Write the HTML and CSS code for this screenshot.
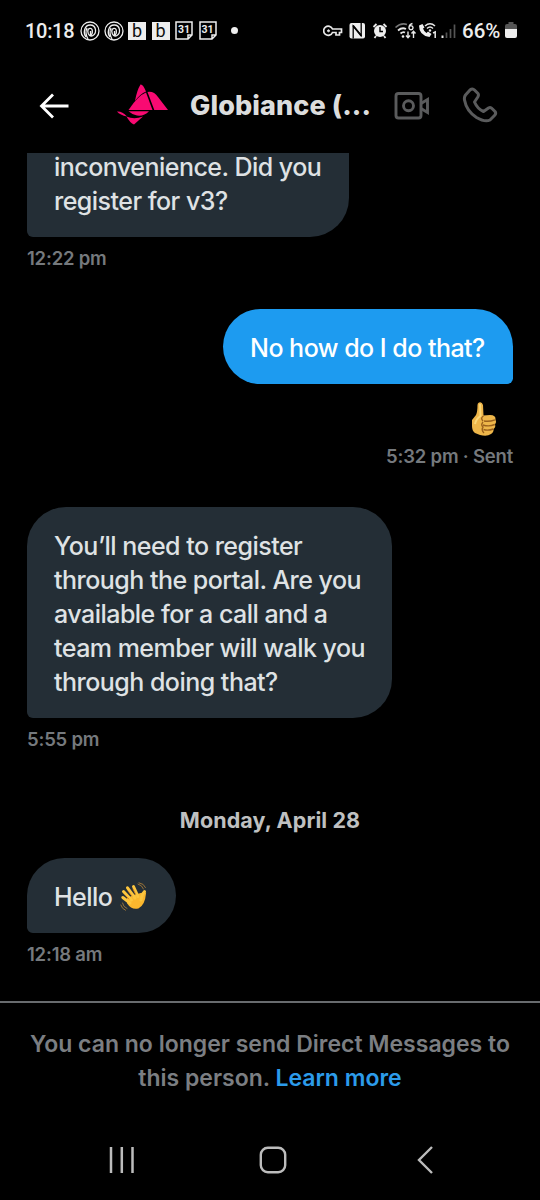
FILE: index.html
```html
<!DOCTYPE html>
<html lang="en">
<head>
<meta charset="utf-8">
<title>Globiance</title>
<link rel="stylesheet" href="styles.css">
</head>
<body>
<div class="phone">
  <div class="status">
    <span class="clock">10:18</span>
    <div class="notifs">
      <svg width="20" height="20" viewBox="0 0 20 20" fill="none" stroke="#eee" stroke-width="1.3"><circle cx="10" cy="10" r="9"/><path d="M6 16C3 12.500 4 4 10.200 4S17 12 13 14.500C10.500 16 8 14 7.800 10.500S12 6 12.300 9.500 11.500 14 10.500 14M10.500 10V15M7 7Q4.500 12 8 18"/></svg>
      <svg width="20" height="20" viewBox="0 0 20 20" fill="none" stroke="#eee" stroke-width="1.3"><circle cx="10" cy="10" r="9"/><path d="M6 16C3 12.500 4 4 10.200 4S17 12 13 14.500C10.500 16 8 14 7.800 10.500S12 6 12.300 9.500 11.500 14 10.500 14M10.500 10V15M7 7Q4.500 12 8 18"/></svg>
      <span class="tile">b</span>
      <span class="tile">b</span>
      <span class="cal"><svg width="18" height="19" viewBox="0 0 18 19" fill="none" stroke="#eee" stroke-width="1.5"><path d="M1 1H17V14L13 18H1ZM13 18V14H17"/></svg><b>31</b></span>
      <span class="cal"><svg width="18" height="19" viewBox="0 0 18 19" fill="none" stroke="#eee" stroke-width="1.5"><path d="M1 1H17V14L13 18H1ZM13 18V14H17"/></svg><b>31</b></span>
      <i class="dot"></i>
    </div>
    <svg class="system" width="136" height="22" viewBox="0 0 136 22" fill="none" stroke="#e8e8e8" stroke-width="2">
      <path d="M9.500 9H18.500V12.500H16.500V15H13V12.500H9.500A4.600 4.600 0 1 1 9.500 9Z" stroke-width="1.700"/><circle cx="5.500" cy="10.800" r="1" fill="#e8e8e8" stroke-width="1"/>
      <rect x="26.500" y="3" width="15.500" height="15.500" rx="2" fill="#eee" stroke="none"/><path d="M30.200 18.500V6L38.200 15.500V3" stroke="#000" stroke-width="1.300"/><path d="M30 5.500L38.400 16" stroke="#000" stroke-width="1.800"/>
      <circle cx="57" cy="11" r="6" fill="#eee" stroke="none"/><path d="M50.500 7L53.500 4M60.500 4L63.500 7M53 16L51.500 18M61 16L62.500 18" stroke-width="1.800"/><path d="M57 7V11.500H60" stroke="#000" stroke-width="1.400"/>
      <path d="M72.500 7.500Q78 2.500 84 4.500" stroke="#777" stroke-width="1.600"/><path d="M75 10.500Q79 7 83 9M77.500 13.500Q80 11.500 82 12.500" stroke-width="1.800"/><circle cx="80" cy="16.500" r="1.300" fill="#eee" stroke="none"/>
      <path d="M89.500 3.500Q86 4.500 86 8A2 2 0 1 0 87 6" stroke-width="1.400"/><path d="M85 11.500V17.500M83 15.500L85 17.800 87 15.500M90.500 18V11.500M88.500 13.500L90.500 11.200 92.500 13.500" stroke-width="1.400"/>
      <path d="M96 5.500Q96 15.500 106.500 17L108.500 14 105 11.500 103.500 13Q101 11.500 100 8.500L101.500 7.500 99.500 4Z" fill="#eee" stroke="none"/>
      <path d="M102 6Q107 1.500 112 6M104 8.500Q107 5.500 110 8.500" stroke-width="1.500"/><circle cx="107" cy="10.500" r="1.200" fill="#eee" stroke="none"/><path d="M110 13L112.200 12V18" stroke-width="1.500"/>
      <path d="M119.500 15.500V18" stroke-width="2"/><path d="M123.500 12.500V18M127.500 9V18M131.500 4.500V18" stroke="#555" stroke-width="1.700"/>
    </svg>
    <span class="percent">66%</span>
    <svg class="battery" width="12" height="17" viewBox="0 0 12 17"><path d="M3.500 0H8.500V2H10Q12 2 12 4V8H0V4Q0 2 2 2H3.500Z" fill="#555"/><path d="M0 7H12V14Q12 16 10 16H2Q0 16 0 14Z" fill="#eee"/></svg>
  </div>

  <header class="topbar">
    <svg class="back" width="30" height="26" viewBox="0 0 30 26" fill="none" stroke="#fff" stroke-width="2.800"><path d="M14 1.500L2.500 13 14 24.500M2.500 13H29.500"/></svg>
    <svg class="logo" width="52" height="44" viewBox="0 0 52 44" fill="#f90a72"><path d="M18 18Q20 7 23.500 1.500Q26 1 29 8.500Q23 11 18 18Z"/><path d="M11.500 27Q21 12.500 29 9.500L35.500 27Z"/><path d="M30.500 9Q37 8 41 14L51 27H37.300Z"/><path d="M11.500 28.200H32Q27 33.500 20 32.500Q15 31.500 11.500 28.200Z"/><path d="M0 28.500Q5 28 10 33.500Q3 32 0 28.500Z"/><path d="M9.500 33.500Q17 37 26 33.500L17 41.500Q13 40 9.500 33.500Z"/></svg>
    <h1 class="title">Globiance (...</h1>
    <svg class="video" width="36" height="30" viewBox="0 0 36 30" fill="none" stroke="#5a5b5c" stroke-width="2.900" stroke-linejoin="round"><rect x="2" y="2.500" width="25" height="24.500" rx="2.500"/><circle cx="14.500" cy="14.800" r="5"/><path d="M27 12.500L33.500 8.500V21.500L27 17.500" stroke-linejoin="miter"/></svg>
    <svg class="call" width="36" height="37" viewBox="0 0 36 37" fill="none" stroke="#5a5b5c" stroke-width="3" stroke-linejoin="round"><path d="M8 3Q10.500 1 12.500 3L16 6.500Q17 8 15.800 10L12.500 15Q15.500 22 21.500 24.500L26.500 21Q28.500 19.800 30 21.500L33 24.500Q34.500 26.500 32.500 28.500L28 33Q23 35.500 14.500 30.500Q4.500 24 2.500 13Q2 10 3.500 8Z"/></svg>
  </header>

  <main class="thread">
    <div class="bubble them cut">inconvenience. Did you<br>register for v3?</div>
    <div class="time t1">12:22 pm</div>
    <div class="bubble me">No how do I do that?</div>
    <svg class="thumb" width="26" height="36" viewBox="0 0 26 36"><path d="M8 1.500Q11 .5 12 4L12.500 14.500 19 14Q25 14 24.500 18.500 26 21 24 23.500 25 26 22.500 28 23 31 20 33 16 36 9 34L4 32Q1 30 1 25V19L5 14Q6.500 11 6.500 4Q6.500 2 8 1.500Z" fill="#eeb64a"/><path d="M12.500 15Q9 17 12 20M13 20Q18 21 24 18.800M12 24Q18 26 23.800 23.500M12.500 28.500Q17 30 22.300 28M12 21Q9.500 24 12 26Q10 29 13 32" fill="none" stroke="#9a601c" stroke-width="1.400"/><path d="M9 3L9.500 15Q5 18 4 23" fill="none" stroke="#fbd778" stroke-width="2"/></svg>
    <div class="time t2">5:32 pm · Sent</div>
    <div class="bubble them long">You’ll need to register<br>through the portal. Are you<br>available for a call and a<br>team member will walk you<br>through doing that?</div>
    <div class="time t3">5:55 pm</div>
    <div class="day">Monday, April 28</div>
    <div class="bubble them hello"><span>Hello</span><svg class="wave" width="28" height="30" viewBox="0 0 28 30" fill="none" stroke-linecap="round"><path d="M8 17L14 14 21 12 25 11.500Q24 23 18 25.500 12 27 8 21Z" fill="#fbb72e" stroke="#fbb72e" stroke-width="2"/><path d="M10 21L2.800 15.500M11.500 18L3.500 9.500M15 16L7.500 5.800M18 14.500L13.500 4.500M21 18Q22 12 24.500 9.500" stroke="#fdc63e" stroke-width="3"/><path d="M9 17L5 13M12 14L8 9M15.500 12L13 7" stroke="#d98219" stroke-width=".8"/><path d="M18 2Q22 3 23.500 7M19 0.800Q24 1.500 25.500 5.500M2.500 21Q3 25 7 26.500M0.800 23Q2 27 5.500 28.300" stroke="#987238" stroke-width="1"/></svg></div>
    <div class="time t4">12:18 am</div>
  </main>

  <footer class="notice">You can no longer send Direct Messages to<br>this person. <a>Learn more</a></footer>

  <nav class="nav">
    <svg width="26" height="28" viewBox="0 0 26 28" stroke="#bcbcbc" stroke-width="2.500"><path d="M2 1V27M12.800 1V27M23.500 1V27"/></svg>
    <svg width="28" height="28" viewBox="0 0 28 28" fill="none" stroke="#bcbcbc" stroke-width="2.400"><rect x="1.800" y="1.800" width="24.400" height="24.400" rx="7"/></svg>
    <svg width="16" height="28" viewBox="0 0 16 28" fill="none" stroke="#bcbcbc" stroke-width="2.400"><path d="M15 1L2 14 15 27"/></svg>
  </nav>
</div>
</body>
</html>
```
FILE: styles.css
```css
* { box-sizing: border-box; }
body { margin: 0; background: #000; font-family: Inter, Roboto, "Liberation Sans", sans-serif; }
.phone { width: 540px; height: 1200px; display: flex; flex-direction: column; overflow: hidden; background: #000; }
.phone svg { display: block; flex: none; }
.status { height: 61px; display: flex; align-items: center; padding-left: 25px; color: #ececec; white-space: nowrap; font-family: Roboto, sans-serif; }
.clock { width: 55px; font-size: 20px; font-weight: 500; letter-spacing: -0.3px; }
.notifs { display: flex; align-items: center; gap: 4px; width: 243px; }
.tile { width: 18px; height: 18px; margin-right: 1.5px; background: #eee; color: #111; font-size: 18px; line-height: 18px; text-align: center; }
.cal { display: grid; width: 18px; margin-right: 1.5px; }
.cal svg, .cal b { grid-area: 1 / 1; }
.cal b { font-size: 10.5px; line-height: 18px; text-align: center; }
.dot { width: 7px; height: 7px; margin-left: 9px; border-radius: 50%; background: #eee; }
.system { width: 136px; }
.percent { margin-left: 3px; width: 43px; font-size: 20.5px; font-weight: 500; }
.topbar { height: 92px; display: flex; align-items: center; padding-left: 39px; }
.back { margin-top: -3px; }
.logo { margin: -5px 0 0 48px; }
.title { margin: -3px 0 0 21px; width: 204px; font-size: 27px; font-weight: 800; letter-spacing: 0.1px; color: #dcdddd; white-space: nowrap; }
.video { margin-top: -3px; }
.call { margin: -4px 0 0 32px; }
.thread { height: 848px; padding: 0 27px; display: flex; flex-direction: column; align-items: flex-start; overflow: hidden; }
.bubble { flex: none; padding: 22px 27px 19px; border-radius: 39px; color: #dfe2e4; font-size: 25px; font-weight: 500; letter-spacing: -0.52px; line-height: 34px; white-space: nowrap; }
.them { background: #242e36; border-bottom-left-radius: 6px; }
.me { align-self: flex-end; background: #1d9bf0; color: #fff; border-bottom-right-radius: 6px; width: 290px; height: 75px; margin-top: 39px; }
.cut { width: 322px; height: 87px; margin-top: -3px; padding-top: 0; border-radius: 0 0 39px 6px; }
.time { flex: none; height: 24px; font-size: 18.5px; font-weight: 600; letter-spacing: -0.2px; line-height: 24px; color: #75797d; white-space: nowrap; }
.t1 { margin-top: 9px; }
.thumb { align-self: flex-end; margin: 17px 16px 0 0; }
.t2 { align-self: flex-end; margin-top: 7px; }
.long { width: 365px; height: 211px; margin-top: 39px; }
.t3 { margin-top: 9px; }
.day { align-self: center; margin-top: 54px; height: 30px; font-size: 21.5px; font-weight: 700; letter-spacing: 0.1px; line-height: 30px; color: #bfc0c1; white-space: nowrap; }
.hello { width: 149px; height: 75px; margin-top: 23px; display: flex; }
.wave { margin: 2px 0 0 8px; }
.t4 { margin-top: 9px; }
.notice { height: 119px; padding-top: 24px; border-top: 2px solid #686b6e; text-align: center; font-size: 23px; font-weight: 600; letter-spacing: 0; line-height: 34px; color: #7b7e82; white-space: nowrap; }
.notice a { color: #2c9bea; }
.nav { height: 80px; display: flex; align-items: center; padding-left: 109px; }
.nav svg + svg { margin-left: 124px; }
.nav svg + svg + svg { margin-left: 130px; }
```
